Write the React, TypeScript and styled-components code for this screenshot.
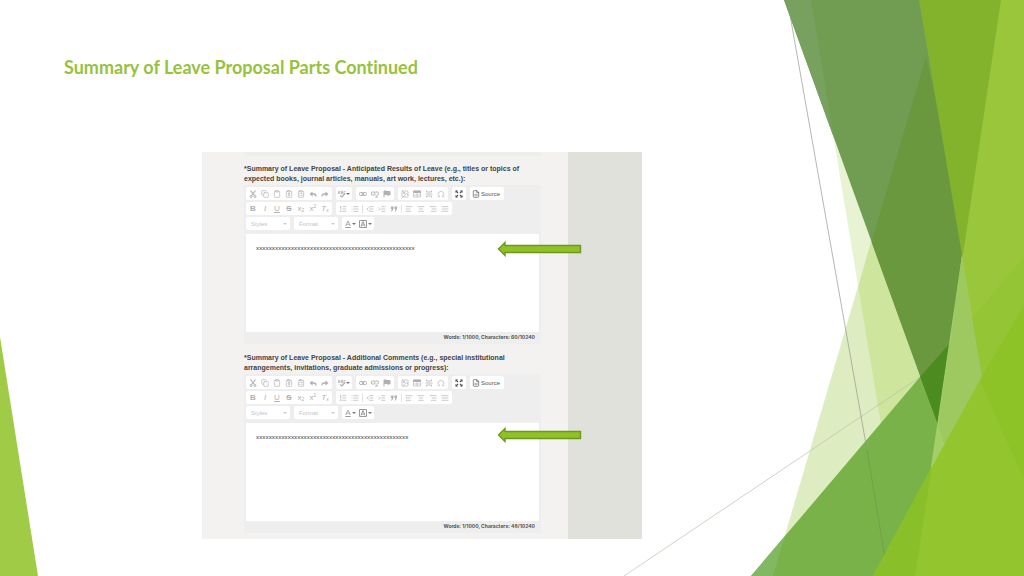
import React from "react";
import styled, { createGlobalStyle } from "styled-components";
import {
  Copy, Clipboard, ClipboardType, ClipboardList, Image, Omega, FileCode,
  ListOrdered, List, IndentDecrease, IndentIncrease,
  TextAlignStart, TextAlignCenter, TextAlignEnd, TextAlignJustify,
} from "lucide-react";

const Global = createGlobalStyle`
  *, *::before, *::after { box-sizing: border-box; }
  body { margin: 0; background: #fff; }
`;

const Slide = styled.main`
  position: relative;
  min-height: 100vh;
  padding: 54px 64px 36px;
  overflow: hidden;
  font-family: "Liberation Sans", Arial, sans-serif;
`;

const Title = styled.h1`
  position: relative;
  margin: 0 0 72px;
  font: 700 18px/26px Lato, "Open Sans", sans-serif;
  font-variant-ligatures: none;
  color: #97c23c;
`;

const Facets = styled.svg<{ $side: "left" | "right" }>`
  position: absolute;
  bottom: 0;
  ${(p) => p.$side}: 0;
  height: 100%;
`;

const Figure = styled.section`
  position: relative;
  display: flex;
  width: 440px;
  max-width: 100%;
  margin: 0 0 0 138px;
  background: #f3f2f0;
`;

const FormColumn = styled.div`
  flex: 1;
  padding: 0 27px 6px 42px;
`;

const SideColumn = styled.div`
  width: 74px;
  background: #e1e1dc;
`;

const PreviousEdge = styled.div`
  height: 4px;
  margin-bottom: 8px;
  background: #eeeeed;
`;

const Field = styled.div`
  position: relative;
  & + & { margin-top: 9px; }
`;

const FieldLabel = styled.label`
  display: block;
  height: 21px;
  font: 700 7px/10px "Liberation Sans", Arial, sans-serif;
  color: #444;
  white-space: nowrap;
`;

const Editor = styled.div`
  background: #eeeeee;
  padding: 2px 2px 0;
  height: 159px;
`;

const ToolRow = styled.div`
  display: flex;
  gap: 4px;
  height: 13px;
  margin-bottom: 2px;
`;

const Group = styled.div`
  display: flex;
  align-items: center;
  padding: 0 1px;
  border-radius: 2px;
  background: #fff;
`;

const Tool = styled.button<{ $strong?: boolean; $wide?: boolean }>`
  display: flex;
  align-items: center;
  justify-content: center;
  width: ${(p) => (p.$wide ? "auto" : "12px")};
  height: 12px;
  padding: ${(p) => (p.$wide ? "0 1px" : "0")};
  border: 0;
  background: none;
  font: 400 6px/12px "Liberation Sans", Arial, sans-serif;
  color: ${(p) => (p.$strong ? "#555" : "#b0b0b0")};
  svg { width: 8px; height: 8px; }
`;

const ColorTool = styled(Tool)`
  gap: 1px;
  width: 15px;
  color: #999;
`;

const SourceText = styled.span`
  padding: 0 2px 0 1px;
`;

const Letter = styled.span<{ $kind: string }>`
  font-size: 8px;
  font-weight: ${(p) => ("bs".includes(p.$kind) ? 700 : 400)};
  font-style: ${(p) => (p.$kind === "i" ? "italic" : "normal")};
  text-decoration: ${(p) => (p.$kind === "u" ? "underline" : p.$kind === "s" ? "line-through" : "none")};
  sub, sup { font-size: 5px; line-height: 0; }
  sub { vertical-align: -1px; }
  sup { vertical-align: 3px; }
`;

const Caret = styled.span`
  border: 2px solid transparent;
  border-top-color: #777;
  border-bottom: 0;
`;

const Divider = styled.span`
  width: 1px;
  height: 8px;
  margin: 0 1px;
  background: #e2e2e2;
`;

const Picker = styled.div`
  position: relative;
  display: flex;
  width: 44px;
  background: #fff;
  border-radius: 2px;
  &::after {
    content: "";
    position: absolute;
    right: 3px;
    top: 6px;
    border: 2px solid transparent;
    border-top-color: #ccc;
    border-bottom: 0;
  }
`;

const PickerSelect = styled.select`
  appearance: none;
  width: 100%;
  padding: 0 5px;
  border: 0;
  background: none;
  font: 400 6px/12px "Liberation Sans", Arial, sans-serif;
  color: #c4c4c4;
`;

const Content = styled.textarea`
  display: block;
  width: 100%;
  height: 98px;
  margin-top: 4px;
  padding: 10px;
  border: 0;
  resize: none;
  overflow: hidden;
  background: #fff;
  font: 400 6px/8px "Noto Sans", sans-serif;
  color: #333;
`;

const Counter = styled.div`
  padding: 1px 4px 0 0;
  text-align: right;
  font: 700 5px/8px Inter, "Liberation Sans", sans-serif;
  color: #555;
`;

const Arrow = styled.svg<{ $top: number }>`
  position: absolute;
  left: 253px;
  top: ${(p) => p.$top}px;
  width: 86px;
  height: 16px;
`;

const PointerArrow = ({ top }: { top: number }) => (
  <Arrow $top={top} viewBox="0 0 86 16" aria-hidden="true">
    <path d="M1.5 8 L8 1.5 V4.5 H83.500 V11.500 H8 V14.500 Z" fill="#90c226" stroke="#6d981f" strokeWidth="1.4" />
  </Arrow>
);

/* Small 16-unit glyphs for the editor toolbar */
const glyph = (children: React.ReactNode) => () => (
  <svg viewBox="0 0 16 16" fill="none" stroke="currentColor" strokeWidth="2">{children}</svg>
);
const CutIcon = glyph(<><path d="M3 1 11 11M13 1 5 11" strokeWidth="2.400" /><circle cx="4" cy="13" r="2" /><circle cx="12" cy="13" r="2" /></>);
const UndoIcon = glyph(<><path d="M1 8 7 3V13Z" fill="currentColor" stroke="none" /><path d="M6 8H10Q14 8 14 13" strokeWidth="2.600" /></>);
const RedoIcon = glyph(<><path d="M15 8 9 3V13Z" fill="currentColor" stroke="none" /><path d="M10 8H6Q2 8 2 13" strokeWidth="2.600" /></>);
const SpellIcon = glyph(<><path d="M1 8V3H4V8M1 6H4M7 2V8H9.500V2H7M7 5H9M15 3H12V8H15" strokeWidth="1.400" /><path d="M4 11 8 14 14 7" strokeWidth="2.400" /></>);
const LinkIcon = glyph(<><rect x="1" y="5" width="7" height="6" rx="2" /><rect x="8" y="5" width="7" height="6" rx="2" /><path d="M5 8H11" /></>);
const UnlinkIcon = glyph(<><rect x="1" y="4" width="7" height="6" rx="2" /><path d="M9 4H13Q15 4 15 7T13 10H11M9 12 13 15M13 12 9 15" /></>);
const FlagIcon = glyph(<path d="M2 15V2H7L8 3H14V10H8L7 9H2" fill="currentColor" />);
const TableIcon = glyph(<><path d="M1 2H15V14H1ZM1 10H15M8 5V14" strokeWidth="1.200" /><path d="M1 2H15V5H1Z" fill="currentColor" /></>);
const RuleIcon = glyph(<path d="M1 8H15M3 1V4H13V1M3 15V12H13V15" strokeWidth="1.600" />);
const ExpandIcon = glyph(<><path d="M2 2 6 6M14 2 10 6M2 14 6 10M14 14 10 10" strokeWidth="2.600" /><path d="M1 1H6L1 6ZM15 1V6L10 1ZM1 15V10L6 15ZM15 15H10L15 10Z" fill="currentColor" stroke="none" /></>);
const QuoteIcon = glyph(<path d="M2 3H7V8L4 13H2L4 8H2ZM9 3H14V8L11 13H9L11 8H9Z" fill="currentColor" stroke="none" />);
const BackgroundIcon = glyph(<><path d="M1 1H15V15H1Z" strokeWidth="2" /><path d="M4 13 8 3 12 13M5.500 10H10.500" /></>);

type Items = readonly (readonly [string, React.ElementType])[];

const clip: Items = [
  ["Cut", CutIcon], ["Copy", Copy], ["Paste", Clipboard], ["Paste as text", ClipboardType],
  ["Paste from Word", ClipboardList], ["Undo", UndoIcon], ["Redo", RedoIcon],
];
const links: Items = [["Link", LinkIcon], ["Unlink", UnlinkIcon], ["Anchor", FlagIcon]];
const inserts: Items = [["Image", Image], ["Table", TableIcon], ["Line", RuleIcon], ["Symbol", Omega]];
const lists: Items = [["Numbered list", ListOrdered], ["Bulleted list", List]];
const indents: Items = [["Outdent", IndentDecrease], ["Indent", IndentIncrease], ["Quote", QuoteIcon]];
const aligns: Items = [
  ["Align left", TextAlignStart], ["Center", TextAlignCenter],
  ["Align right", TextAlignEnd], ["Justify", TextAlignJustify],
];

const Tools = ({ items }: { items: Items }) => (
  <>
    {items.map(([name, Icon]) => (
      <Tool key={name} type="button" aria-label={name}><Icon /></Tool>
    ))}
  </>
);

interface FieldProps {
  id: string;
  lines: [string, string];
  value: string;
  counter: string;
  arrowTop: number;
}

const RichField = ({ id, lines, value, counter, arrowTop }: FieldProps) => (
  <Field>
    <FieldLabel htmlFor={id}>{lines[0]}<br />{lines[1]}</FieldLabel>
    <Editor>
      <ToolRow>
        <Group><Tools items={clip} /></Group>
        <Group><Tool type="button" $wide aria-label="Spell check"><SpellIcon /><Caret /></Tool></Group>
        <Group><Tools items={links} /></Group>
        <Group><Tools items={inserts} /></Group>
        <Group><Tool type="button" $strong aria-label="Maximize"><ExpandIcon /></Tool></Group>
        <Group><Tool type="button" $strong $wide><FileCode /><SourceText>Source</SourceText></Tool></Group>
      </ToolRow>
      <ToolRow>
        <Group>
          <Tool type="button"><Letter $kind="b">B</Letter></Tool>
          <Tool type="button"><Letter $kind="i">I</Letter></Tool>
          <Tool type="button"><Letter $kind="u">U</Letter></Tool>
          <Tool type="button"><Letter $kind="s">S</Letter></Tool>
          <Tool type="button"><Letter $kind="x">x<sub>2</sub></Letter></Tool>
          <Tool type="button"><Letter $kind="x">x<sup>2</sup></Letter></Tool>
          <Tool type="button"><Letter $kind="i">T<sub>x</sub></Letter></Tool>
        </Group>
        <Group>
          <Tools items={lists} /><Divider /><Tools items={indents} /><Divider /><Tools items={aligns} />
        </Group>
      </ToolRow>
      <ToolRow>
        <Picker><PickerSelect aria-label="Styles"><option>Styles</option></PickerSelect></Picker>
        <Picker><PickerSelect aria-label="Format"><option>Format</option></PickerSelect></Picker>
        <Group>
          <ColorTool type="button" aria-label="Text color"><Letter $kind="u">A</Letter><Caret /></ColorTool>
          <ColorTool type="button" aria-label="Background color"><BackgroundIcon /><Caret /></ColorTool>
        </Group>
      </ToolRow>
      <Content id={id} defaultValue={value} spellCheck={false} />
      <Counter>{counter}</Counter>
    </Editor>
    <PointerArrow top={arrowTop} />
  </Field>
);

export default function App() {
  return (
    <Slide>
      <Global />
      <Facets $side="left" viewBox="0 0 38 576" aria-hidden="true">
        <path d="M0 337 38 576H0Z" fill="#9fcb46" />
      </Facets>
      <Facets $side="right" viewBox="620 0 404 576" aria-hidden="true">
        <path d="M833 134 900 300V540H900Z" fill="#e8f3d4" />
        <path d="M871 242 940 420V576H773Z" fill="#deedc1" />
        <path d="M871 242 960 470V576H906L858.300 287Z" fill="#cde59d" />
        <path d="M624 576 920 377" stroke="#b9c2ac" strokeWidth="0.7" />
        <path d="M784 0H930L970 255 938 425Z" fill="#709d52" />
        <path d="M784 0H811L833.600 137Z" fill="#78a160" />
        <path d="M926 57 970 255 938 425 871.500 242Z" fill="#69983f" />
        <path d="M751 576 920 377 938 425 1024 440V576Z" fill="#78b248" />
        <path d="M751 576 785 536 773 576Z" fill="#80b962" />
        <path d="M920 377 950 343 955 400 938 425Z" fill="#4b8b20" />
        <path d="M790 15 867 450" stroke="#93998d" strokeWidth="0.7" fill="none" />
        <path d="M867 450 888 576" stroke="#6d9a4b" strokeWidth="0.7" />
        <path d="M919 0H1010V255H962Z" fill="#83b32d" />
        <path d="M1001 0H1024V576H915Z" fill="#9ac63b" />
        <path d="M962 255 990 420 915 576Z" fill="#a4cf68" />
        <path d="M949.800 343 972 318 990 420 944 443 938 425Z" fill="#9dc960" />
        <path d="M962 255 1024 200V400H986Z" fill="#9ac63b" />
        <path d="M972 318 1024 257V400H986Z" fill="#93c535" />
        <path d="M962 255 972 318 982 380 944 443 940 425Z" fill="#9dc960" />
        <path d="M873 576 933 465 980 380 1024 305V576Z" fill="#92c52e" />
        <path d="M873 576 932 466 915 576Z" fill="#89c02a" />
        <path d="M980 380 1024 305V480Z" fill="#8ec328" />
      </Facets>
      <Title>Summary of Leave Proposal Parts Continued</Title>
      <Figure>
        <FormColumn>
          <PreviousEdge />
          <RichField
            id="results"
            lines={["*Summary of Leave Proposal - Anticipated Results of Leave (e.g., titles or topics of", "expected books, journal articles, manuals, art work, lectures, etc.):"]}
            value={"x".repeat(50)}
            counter="Words: 1/1000, Characters: 60/10240"
            arrowTop={77}
          />
          <RichField
            id="comments"
            lines={["*Summary of Leave Proposal - Additional Comments (e.g., special institutional", "arrangements, invitations, graduate admissions or progress):"]}
            value={"x".repeat(48)}
            counter="Words: 1/1000, Characters: 48/10240"
            arrowTop={74}
          />
        </FormColumn>
        <SideColumn />
      </Figure>
    </Slide>
  );
}
